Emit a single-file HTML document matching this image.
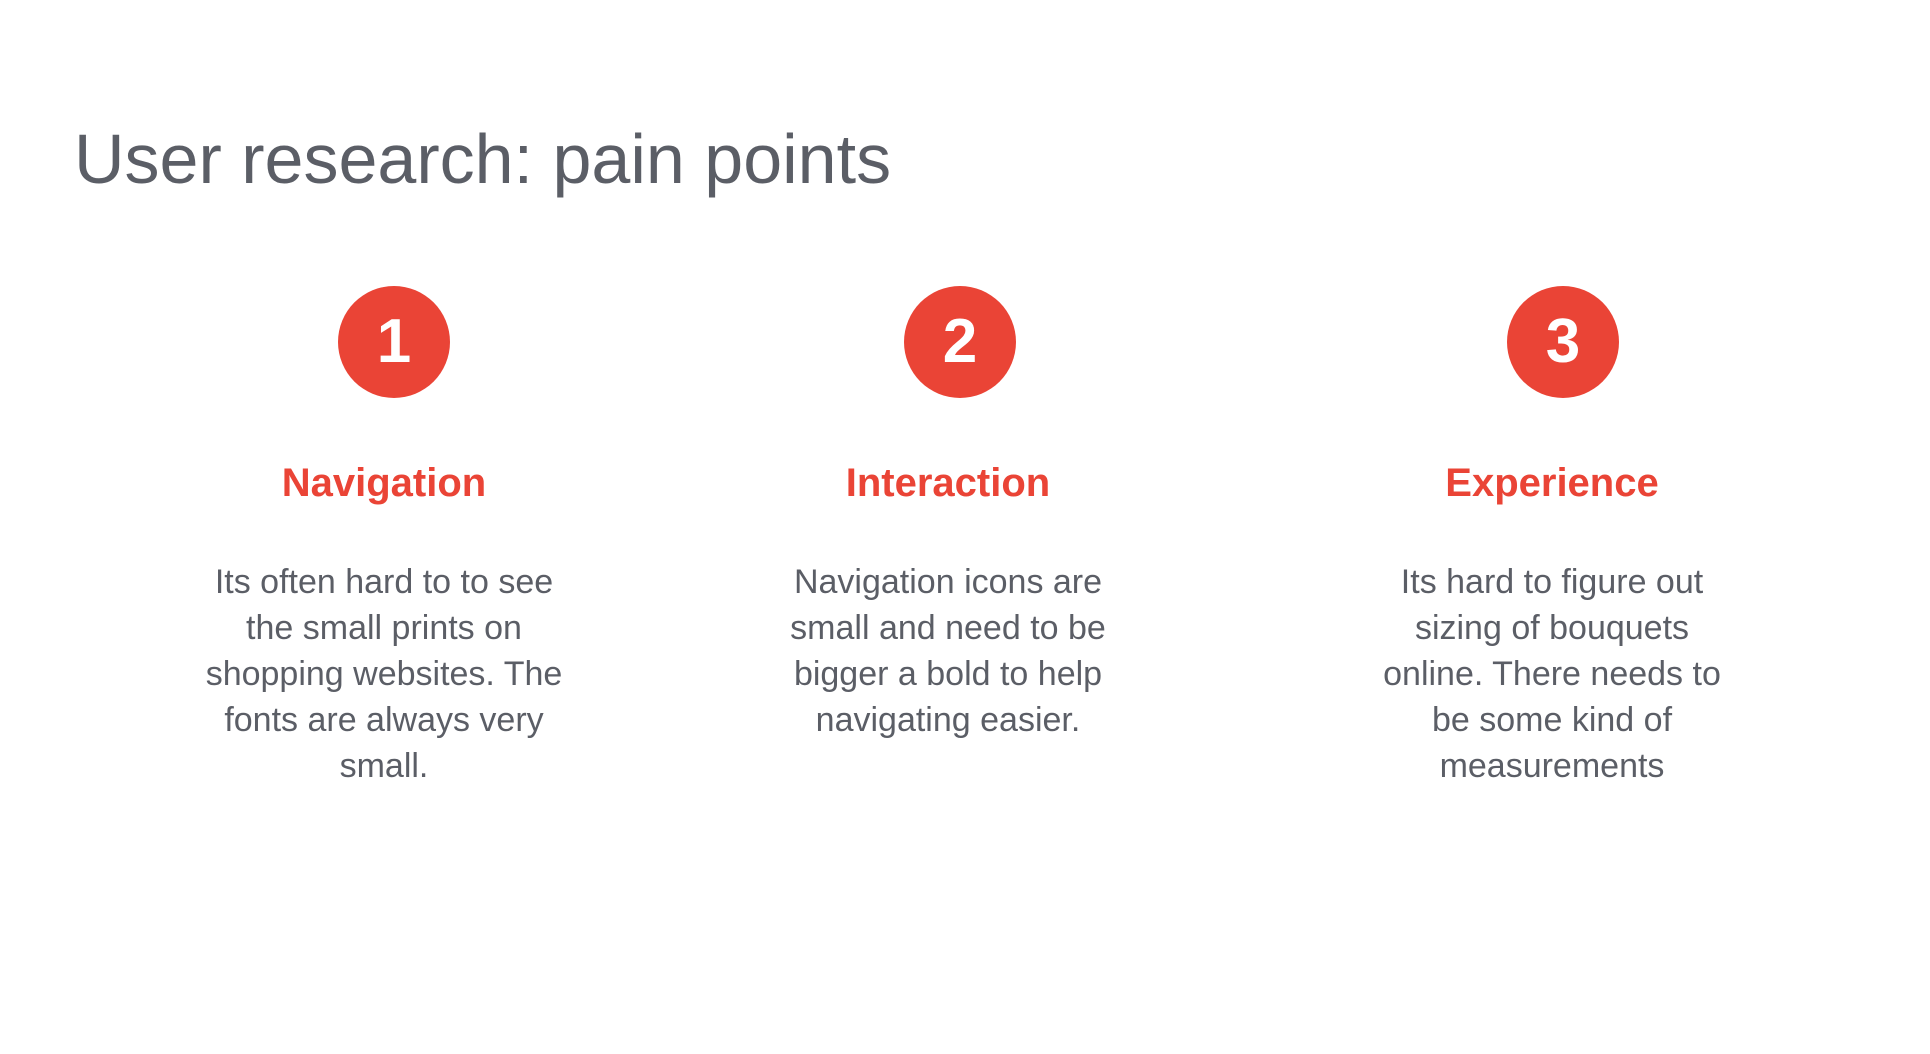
<!DOCTYPE html>
<html><head><meta charset="utf-8"><style>
html,body{margin:0;padding:0;background:#fff;width:1930px;height:1054px;overflow:hidden;font-family:"Liberation Sans",sans-serif;}
.t{position:absolute;left:74px;top:124px;font-size:70px;color:#5b5e66;white-space:nowrap;line-height:1;}
.c{position:absolute;width:112px;height:112px;border-radius:50%;background:#ea4436;color:#fff;font-weight:bold;font-size:62px;text-align:center;line-height:112px;}
.h{position:absolute;width:500px;text-align:center;font-weight:bold;font-size:40px;color:#ea4436;line-height:1;}
.b{position:absolute;width:500px;text-align:center;font-size:34px;color:#5b5e66;line-height:46px;}
</style></head><body>
<div class="t">User research: pain points</div>
<div class="c" style="left:338px;top:286px">1</div>
<div class="c" style="left:904px;top:286px">2</div>
<div class="c" style="left:1507px;top:286px">3</div>
<div class="h" style="left:134px;top:463px">Navigation</div>
<div class="h" style="left:698px;top:463px">Interaction</div>
<div class="h" style="left:1302px;top:463px">Experience</div>
<div class="b" style="left:134px;top:559px">Its often hard to to see<br>the small prints on<br>shopping websites. The<br>fonts are always very<br>small.</div>
<div class="b" style="left:698px;top:559px">Navigation icons are<br>small and need to be<br>bigger a bold to help<br>navigating easier.</div>
<div class="b" style="left:1302px;top:559px">Its hard to figure out<br>sizing of bouquets<br>online. There needs to<br>be some kind of<br>measurements</div>
</body></html>
